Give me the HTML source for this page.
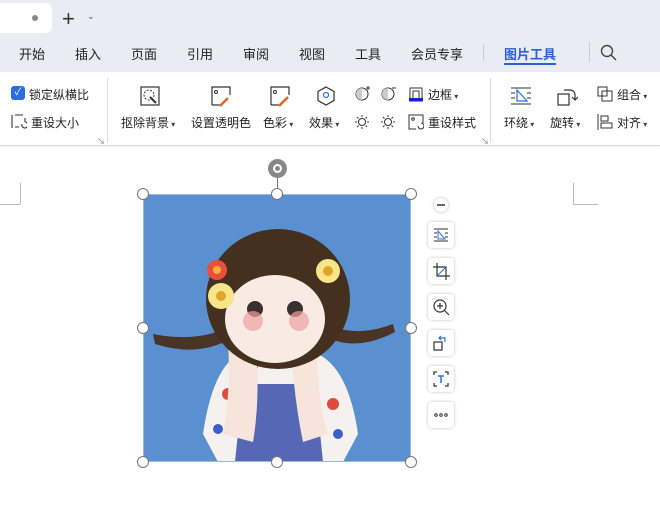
<!DOCTYPE html>
<html><head><meta charset="utf-8"><style>
*{margin:0;padding:0;box-sizing:border-box}
body{width:660px;height:518px;overflow:hidden;background:#fff;font-family:"Liberation Sans","Noto Sans CJK SC",sans-serif;color:#222;position:relative;font-size:12px}
.a{position:absolute;white-space:nowrap}
.top{position:absolute;left:0;top:0;width:660px;height:72px;background:#e9edf3}
.rib{position:absolute;left:0;top:72px;width:660px;height:74px;background:#fff;border-bottom:1px solid #d6d9de;box-shadow:0 1px 2px rgba(0,0,0,.08)}
.m{font-size:13px;top:44px;color:#222}
.t{font-size:12px;color:#222}
.h{position:absolute;width:12px;height:12px;border-radius:50%;background:#fff;border:1px solid #777}
.tb{position:absolute;left:428px;width:26px;height:26px;background:#fff;border-radius:4px;box-shadow:0 0 3px rgba(0,0,0,.25)}
.dd{font-size:8px;color:#444}
</style></head><body>
<div class="top"></div>
<div class="a" style="left:-10px;top:3px;width:62px;height:30px;background:#fff;border-radius:6px"></div>
<div class="a" style="left:32px;top:15px;width:6px;height:6px;border-radius:50%;background:#888"></div>
<div class="a" style="left:62px;top:6px;font-size:22px;color:#333;font-weight:300">+</div>
<div class="a" style="left:87px;top:11px;font-size:9px;color:#555">⌄</div>
<div class="a m" style="left:19px">开始</div>
<div class="a m" style="left:75px">插入</div>
<div class="a m" style="left:131px">页面</div>
<div class="a m" style="left:187px">引用</div>
<div class="a m" style="left:243px">审阅</div>
<div class="a m" style="left:299px">视图</div>
<div class="a m" style="left:355px">工具</div>
<div class="a m" style="left:411px">会员专享</div>
<div class="a" style="left:483px;top:44px;width:1px;height:17px;background:#ccc"></div>
<div class="a m" style="left:504px;color:#2b5fdc;font-weight:bold">图片工具</div>
<div class="a" style="left:504px;top:63px;width:52px;height:2px;background:#2b5fdc"></div>
<div class="a" style="left:589px;top:42px;width:1px;height:20px;background:#ccc"></div>
<svg class="a" style="left:600px;top:44px" width="18" height="18"><circle cx="7" cy="7" r="5.5" fill="none" stroke="#444" stroke-width="1.4"/><path d="M11 11 L16 16" stroke="#444" stroke-width="1.4"/></svg>
<div class="rib"></div>
<div class="a" style="left:11px;top:86px;width:14px;height:14px;background:#2b6de0;border-radius:3px;color:#fff;font-size:10px;text-align:center;line-height:14px">✓</div>
<div class="a t" style="left:29px;top:86px">锁定纵横比</div>
<svg class="a" style="left:11px;top:113px" width="16" height="16"><path d="M1 2v13M4 2h8M4 14h4M14 5v4M11 11a3 3 0 1 0 3 -2" fill="none" stroke="#333" stroke-width="1.1"/></svg>
<div class="a t" style="left:31px;top:114px">重设大小</div>
<div class="a" style="left:97px;top:136px;font-size:8px;color:#777">↘</div>
<div class="a" style="left:107px;top:78px;width:1px;height:64px;background:#ddd"></div>
<svg class="a" style="left:139px;top:85px" width="22" height="22"><rect x="2" y="2" width="18" height="18" fill="none" stroke="#333" stroke-width="1.2"/><circle cx="10" cy="10" r="5" fill="none" stroke="#333" stroke-dasharray="2 1.5"/><path d="M11 12l6 6" stroke="#333" stroke-width="2"/></svg>
<div class="a t" style="left:121px;top:114px">抠除背景<span class="dd"> ▾</span></div>
<svg class="a" style="left:210px;top:85px" width="22" height="22"><path d="M2 20V2h18v8M2 20h10" fill="none" stroke="#333" stroke-width="1.2"/><circle cx="6" cy="7" r="1.5" fill="none" stroke="#333"/><path d="M10 21l8-8" stroke="#e0662a" stroke-width="2.5"/></svg>
<div class="a t" style="left:191px;top:114px">设置透明色</div>
<svg class="a" style="left:269px;top:85px" width="22" height="22"><path d="M2 20V2h18v8M2 20h10" fill="none" stroke="#333" stroke-width="1.2"/><circle cx="6" cy="7" r="1.5" fill="none" stroke="#333"/><path d="M10 21l9-9" stroke="#e0662a" stroke-width="2.5"/></svg>
<div class="a t" style="left:263px;top:114px">色彩<span class="dd"> ▾</span></div>
<svg class="a" style="left:315px;top:85px" width="22" height="22"><path d="M11 2l8 4.5v9L11 20l-8-4.5v-9z" fill="none" stroke="#333" stroke-width="1.2"/><circle cx="11" cy="10" r="2.5" fill="none" stroke="#2b6de0" stroke-width="1.2"/></svg>
<div class="a t" style="left:309px;top:114px">效果<span class="dd"> ▾</span></div>
<svg class="a" style="left:355px;top:86px" width="16" height="16"><circle cx="7" cy="8" r="6" fill="none" stroke="#333"/><path d="M7 2a6 6 0 0 0 0 12z" fill="#ccc"/><path d="M13 0v4M11 2h4" stroke="#333"/></svg>
<svg class="a" style="left:381px;top:86px" width="16" height="16"><circle cx="7" cy="8" r="6" fill="none" stroke="#333"/><path d="M7 2a6 6 0 0 0 0 12z" fill="#ccc"/><path d="M11 2h4" stroke="#333"/></svg>
<svg class="a" style="left:355px;top:114px" width="16" height="16"><circle cx="7" cy="8" r="3.5" fill="none" stroke="#333"/><path d="M7 1v2M7 13v2M0 8h2M12 8h2M2 3l1.5 1.5M12 3l-1.5 1.5M2 13l1.5-1.5M12 13l-1.5-1.5" stroke="#333"/></svg>
<svg class="a" style="left:381px;top:114px" width="16" height="16"><circle cx="7" cy="8" r="3.5" fill="none" stroke="#333"/><path d="M7 1v2M7 13v2M0 8h2M12 8h2M2 3l1.5 1.5M12 3l-1.5 1.5M2 13l1.5-1.5M12 13l-1.5-1.5" stroke="#333"/></svg>
<svg class="a" style="left:408px;top:86px" width="16" height="16"><path d="M2 12V2h12v10M5 12V5h6v7" fill="none" stroke="#333"/><rect x="1" y="12" width="14" height="3.5" fill="#1a1adb"/></svg>
<div class="a t" style="left:428px;top:86px">边框<span class="dd"> ▾</span></div>
<svg class="a" style="left:408px;top:114px" width="16" height="16"><path d="M8 15H1V1h14v8" fill="none" stroke="#333"/><circle cx="5" cy="5" r="1.3" fill="none" stroke="#333"/><path d="M10 12a3 3 0 1 0 3-3" fill="none" stroke="#333"/></svg>
<div class="a t" style="left:428px;top:114px">重设样式</div>
<div class="a" style="left:481px;top:136px;font-size:8px;color:#777">↘</div>
<div a class="a" style="left:490px;top:78px;width:1px;height:64px;background:#ddd"></div>
<svg class="a" style="left:510px;top:85px" width="22" height="22"><path d="M1 3h20M1 19h20M1 8h4M1 13h4M17 8h4M17 13h4" stroke="#333" stroke-width="1.1"/><path d="M7 5v11h10z" fill="none" stroke="#2b6de0" stroke-width="1.2"/></svg>
<div class="a t" style="left:504px;top:114px">环绕<span class="dd"> ▾</span></div>
<svg class="a" style="left:556px;top:85px" width="22" height="22"><rect x="2" y="9" width="11" height="11" fill="none" stroke="#333" stroke-width="1.2"/><path d="M8 5h6a5 5 0 0 1 5 5v5M16 12l3 3 3-3" fill="none" stroke="#333" stroke-width="1.2"/></svg>
<div class="a t" style="left:550px;top:114px">旋转<span class="dd"> ▾</span></div>
<svg class="a" style="left:597px;top:86px" width="16" height="16"><rect x="1" y="1" width="9" height="9" fill="none" stroke="#333"/><rect x="5" y="5" width="10" height="10" fill="none" stroke="#333"/></svg>
<div class="a t" style="left:617px;top:86px">组合<span class="dd"> ▾</span></div>
<svg class="a" style="left:597px;top:114px" width="16" height="16"><path d="M1 0v16" stroke="#333"/><rect x="4" y="2" width="7" height="5" fill="none" stroke="#333"/><rect x="4" y="9" width="11" height="5" fill="none" stroke="#333"/></svg>
<div class="a t" style="left:617px;top:114px">对齐<span class="dd"> ▾</span></div>
<!-- doc corners -->
<div class="a" style="left:0;top:204px;width:20px;height:1px;background:#bbb"></div>
<div class="a" style="left:20px;top:183px;width:1px;height:21px;background:#bbb"></div>
<div class="a" style="left:573px;top:204px;width:25px;height:1px;background:#bbb"></div>
<div class="a" style="left:573px;top:183px;width:1px;height:21px;background:#bbb"></div>
<!-- image -->
<svg class="a" style="left:143px;top:194px" width="268" height="268" viewBox="0 0 268 268">
<rect width="268" height="268" fill="#5b90d0"/>
<path d="M60 240 Q70 170 100 158 L170 158 Q205 170 215 240 L200 268 L75 268z" fill="#f4f1ee"/>
<path d="M100 190 L172 190 L180 268 L92 268z" fill="#5668b5"/>
<circle cx="85" cy="200" r="6" fill="#e04a3c"/><circle cx="190" cy="210" r="6" fill="#e04a3c"/><circle cx="110" cy="172" r="5" fill="#e04a3c"/><circle cx="158" cy="170" r="5" fill="#3a5fc4"/><circle cx="195" cy="240" r="5" fill="#3a5fc4"/><circle cx="75" cy="235" r="5" fill="#3a5fc4"/>
<path d="M85 145 Q88 200 80 240 L110 248 Q118 200 112 145z" fill="#f7e4da"/>
<path d="M175 145 Q172 200 185 240 L160 248 Q150 200 148 145z" fill="#f7e4da"/>
<path d="M10 140 Q60 150 95 128 L95 140 Q60 165 12 150z" fill="#4a3426"/>
<path d="M250 130 Q210 145 180 128 L178 140 Q210 160 252 138z" fill="#4a3426"/>
<ellipse cx="135" cy="105" rx="72" ry="70" fill="#45301f"/>
<ellipse cx="132" cy="125" rx="50" ry="44" fill="#f9ebe3"/>
<path d="M80 95 Q130 60 185 95 Q180 70 135 52 Q90 60 80 95z" fill="#45301f"/>
<circle cx="112" cy="115" r="8" fill="#3a3030"/><circle cx="152" cy="115" r="8" fill="#3a3030"/>
<circle cx="110" cy="127" r="10" fill="#f0a0a0" opacity=".7"/><circle cx="156" cy="127" r="10" fill="#f0a0a0" opacity=".7"/>
<circle cx="74" cy="76" r="10" fill="#e8503c"/><circle cx="74" cy="76" r="4" fill="#f2b23a"/>
<circle cx="78" cy="102" r="13" fill="#f7e58a"/><circle cx="78" cy="102" r="5" fill="#e3a32a"/>
<circle cx="185" cy="77" r="12" fill="#f7e58a"/><circle cx="185" cy="77" r="5" fill="#e3a32a"/>
</svg>
<div class="a" style="left:143px;top:194px;width:268px;height:268px;border:1px solid #9bb8e0"></div>
<div class="a" style="left:277px;top:176px;width:1px;height:18px;background:#777"></div>
<div class="a" style="left:268px;top:159px;width:19px;height:19px;border-radius:50%;background:#888"></div>
<div class="a" style="left:273px;top:164px;width:9px;height:9px;border-radius:50%;border:2px solid #fff"></div>
<div class="h" style="left:137px;top:188px"></div><div class="h" style="left:271px;top:188px"></div><div class="h" style="left:405px;top:188px"></div>
<div class="h" style="left:137px;top:322px"></div><div class="h" style="left:405px;top:322px"></div>
<div class="h" style="left:137px;top:456px"></div><div class="h" style="left:271px;top:456px"></div><div class="h" style="left:405px;top:456px"></div>
<!-- side toolbar -->
<div class="a" style="left:434px;top:198px;width:14px;height:14px;border-radius:50%;background:#fff;box-shadow:0 0 3px rgba(0,0,0,.3)"></div>
<div class="a" style="left:437px;top:204px;width:8px;height:2px;background:#666"></div>
<div class="tb" style="top:222px"><svg width="26" height="26"><path d="M6 7h14M6 19h14M6 11h3M6 15h3M17 11h3M17 15h3" stroke="#333"/><path d="M10 9v8h7z" fill="none" stroke="#2b6de0"/></svg></div>
<div class="tb" style="top:258px"><svg width="26" height="26"><path d="M9 5v13h13M5 9h13v13" fill="none" stroke="#333" stroke-width="1.2"/><path d="M9 18L18 9" stroke="#2b6de0"/></svg></div>
<div class="tb" style="top:294px"><svg width="26" height="26"><circle cx="12" cy="12" r="6" fill="none" stroke="#333" stroke-width="1.2"/><path d="M9 12h6M12 9v6M16.5 16.5L21 21" stroke="#333" stroke-width="1.2"/></svg></div>
<div class="tb" style="top:330px"><svg width="26" height="26"><rect x="6" y="12" width="8" height="8" fill="none" stroke="#333" stroke-width="1.2"/><path d="M11 8h6v4M13 6l-2 2 2 2" fill="none" stroke="#2b6de0" stroke-width="1.2"/></svg></div>
<div class="tb" style="top:366px"><svg width="26" height="26"><path d="M6 9V6h3M17 6h3v3M20 17v3h-3M9 20H6v-3" fill="none" stroke="#333" stroke-width="1.2"/><path d="M10 10h6M13 10v7" stroke="#2b6de0" stroke-width="1.5"/></svg></div>
<div class="tb" style="top:402px"><svg width="26" height="26"><circle cx="8" cy="13" r="1.3" fill="none" stroke="#333"/><circle cx="13" cy="13" r="1.3" fill="none" stroke="#333"/><circle cx="18" cy="13" r="1.3" fill="none" stroke="#333"/></svg></div>
</body></html>
